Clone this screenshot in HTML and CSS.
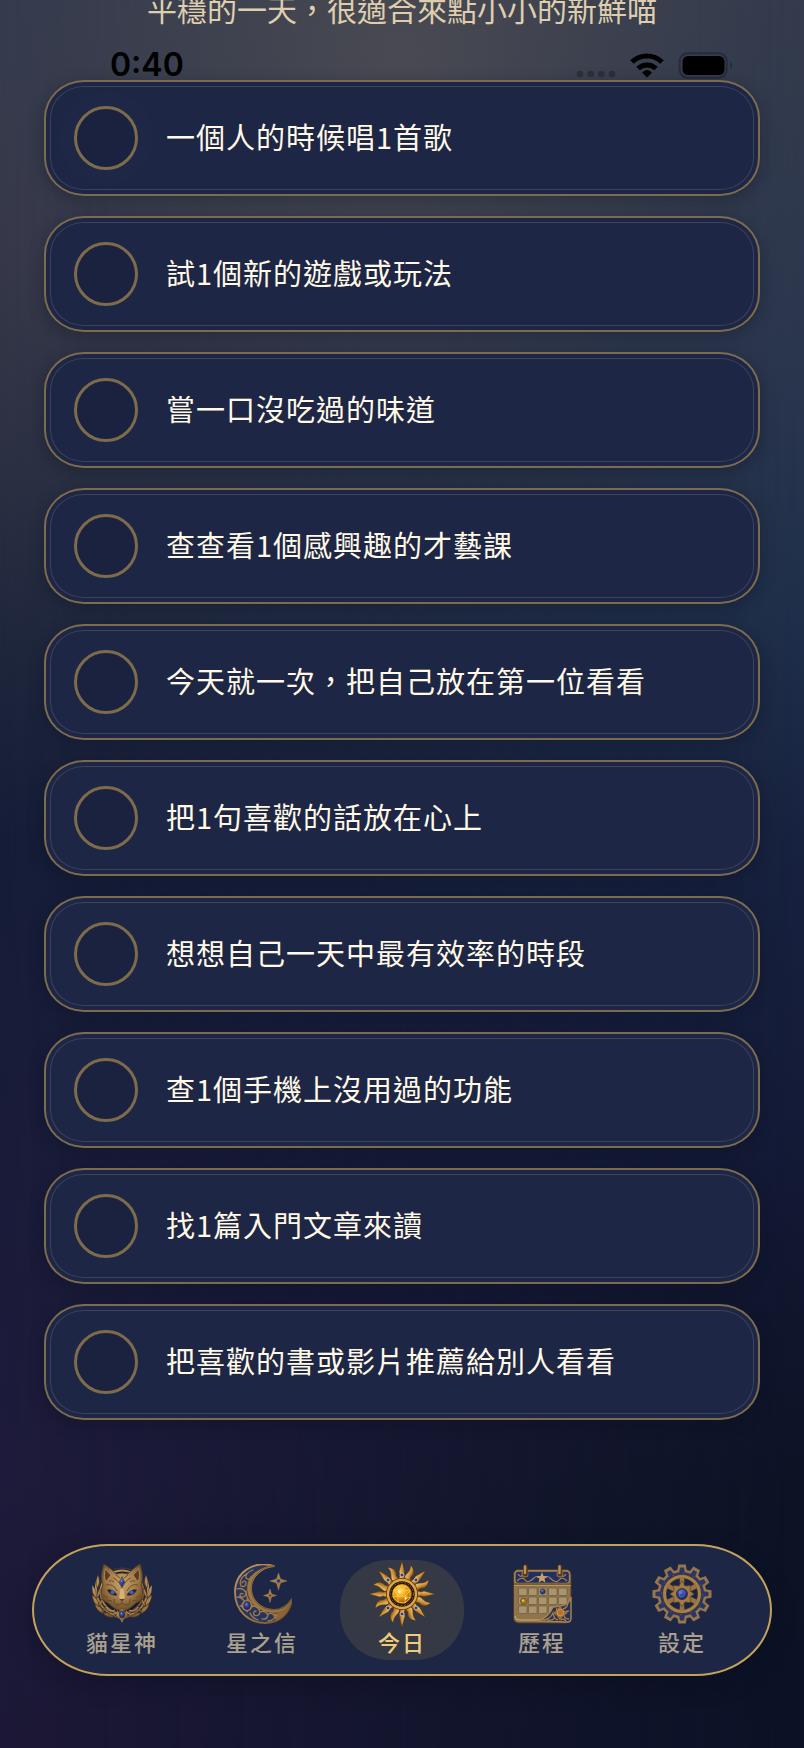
FILE: index.html
```html
<!DOCTYPE html>
<html lang="zh-Hant">
<head>
<meta charset="utf-8">
<meta name="viewport" content="width=device-width, initial-scale=1">
<title>今日</title>
<link rel="stylesheet" href="styles.css">
</head>
<body>
<div class="screen">
  <p class="intro">平穩的一天，很適合來點小小的新鮮喵</p>

  <header class="status">
    <time class="status-time">0:40</time>
    <svg class="status-icons" viewBox="0 0 158 28" aria-hidden="true">
      <g fill="#2b303c"><circle cx="4" cy="23" r="3.300"/><circle cx="14.700" cy="23" r="3.300"/><circle cx="25.400" cy="23" r="3.300"/><circle cx="36" cy="23" r="3.300"/></g>
      <g fill="none" stroke="#000" stroke-width="5">
        <path d="M56 11a21.500 21.500 0 0 1 30 0"/>
        <path d="M62 17.500a13 13 0 0 1 18 0"/>
      </g>
      <path d="M66 21.500q5-5 10 0l-5 5z" fill="#000"/>
      <rect x="103.700" y="2.200" width="47" height="24.600" rx="8" fill="none" stroke="#252b3a" stroke-width="2"/>
      <rect x="106.500" y="5" width="42" height="19" rx="5.500" fill="#000"/>
      <path d="M154.500 10.500q3 4 0 8z" fill="#1c2740"/>
    </svg>
  </header>

  <main class="tasks">
    <label class="task"><input class="check check-glow" type="checkbox"><span>一個人的時候唱1首歌</span></label>
    <label class="task"><input class="check" type="checkbox"><span>試1個新的遊戲或玩法</span></label>
    <label class="task"><input class="check" type="checkbox"><span>嘗一口沒吃過的味道</span></label>
    <label class="task"><input class="check" type="checkbox"><span>查查看1個感興趣的才藝課</span></label>
    <label class="task"><input class="check" type="checkbox"><span>今天就一次，把自己放在第一位看看</span></label>
    <label class="task"><input class="check" type="checkbox"><span>把1句喜歡的話放在心上</span></label>
    <label class="task"><input class="check" type="checkbox"><span>想想自己一天中最有效率的時段</span></label>
    <label class="task"><input class="check" type="checkbox"><span>查1個手機上沒用過的功能</span></label>
    <label class="task"><input class="check" type="checkbox"><span>找1篇入門文章來讀</span></label>
    <label class="task"><input class="check" type="checkbox"><span>把喜歡的書或影片推薦給別人看看</span></label>
  </main>

  <nav class="tabs">
    <a class="tab" href="#cat">
      <svg class="tab-icon" viewBox="0 0 60 60" aria-hidden="true">
        <defs>
          <linearGradient id="bronze" x1="0" y1="0" x2="1" y2="1"><stop offset="0" stop-color="#c39a5e"/><stop offset=".5" stop-color="#a27a45"/><stop offset="1" stop-color="#684824"/></linearGradient>
          <radialGradient id="fur" cx=".5" cy=".4" r=".65"><stop offset="0" stop-color="#c9a56d"/><stop offset=".55" stop-color="#9d7846"/><stop offset="1" stop-color="#5a3f1f"/></radialGradient>
          <radialGradient id="sapphire" cx=".4" cy=".35" r=".7"><stop offset="0" stop-color="#6c86dc"/><stop offset=".4" stop-color="#2943a4"/><stop offset="1" stop-color="#111c5e"/></radialGradient>
        </defs>
        <circle cx="30" cy="28" r="21.500" fill="#141a34" stroke="url(#bronze)" stroke-width="1.800"/>
        <circle cx="30" cy="28" r="24" fill="none" stroke="#493822" stroke-width="1"/>
        <g id="laurel">
          <path d="M5 16C1 32 8 47 27 54" fill="none" stroke="url(#bronze)" stroke-width="1.800"/>
          <path d="M6 11c2 5 2 9-1 13-1-5-1-9 1-13zM0 21c4 4 5 8 4 13-4-4-4-8-4-13zM8 24c1 4 0 7-3 10 0-4 1-7 3-10zM0 31c5 3 7 7 7 12-5-3-6-7-7-12zM10 35c1 4-1 6-3 8-1-3 1-6 3-8zM3 40c5 1 8 5 9 10-5-2-8-5-9-10zM14 42c0 3-1 5-3 7-1-3 1-5 3-7zM11 49c5-1 8 1 11 4-4 1-8 0-11-4z" fill="url(#bronze)" stroke="#3f2d1b" stroke-width=".5"/>
          <path d="M14 43q3 6 9 3M18 49q5 3 8-2" fill="none" stroke="#b18b54" stroke-width="1.200"/>
        </g>
        <use href="#laurel" transform="matrix(-1 0 0 1 60 0)"/>
        <path d="M12 0C9 8 9 16 11 21 9 24 10 28 9 31c1 5 4 7 7 8 3 3 6 5 9 7q5 3 10 0c3-2 6-4 9-7 3-1 6-3 7-8-1-3 0-7-2-10 2-5 2-13-1-21-5 3-9 7-12 10q-6-2-12 0C21 7 17 3 12 0z" fill="url(#fur)" stroke="#543b1d" stroke-width=".8"/>
        <path d="M13.500 4.500C12 9 12 14 14 18l5-7C17 9 15 7 13.500 4.500zM46.500 4.500C48 9 48 14 46 18l-5-7c2-2 4-4 5.500-6.500z" fill="#5d3d22" stroke="#cba56b" stroke-width=".6"/>
        <path d="M14 21q7-2 11 6M46 21q-7-2-11 6M21 14q4 1 6 5M39 14q-4 1-6 5M24 11l4 3M36 11l-4 3M11 31l5 3M49 31l-5 3M14 36l6 1M46 36l-6 1M17 17q3-1 5 1M43 17q-3-1-5 1" fill="none" stroke="#644723" stroke-width=".9"/>
        <path d="M28.500 25l-1.500 9 3 2 3-2-1.500-9z" fill="#d5b177"/>
        <path d="M15.500 26q6-1 9.500 5-7 1-9.500-5zM44.500 26q-6-1-9.500 5 7 1 9.500-5z" fill="#16204c" stroke="#3b2815" stroke-width=".8"/>
        <circle cx="20.500" cy="28.300" r="2" fill="#4261c0"/><circle cx="39.500" cy="28.300" r="2" fill="#4261c0"/>
        <path d="M27.500 35h5l-2.500 2.500z" fill="#5c3b22"/>
        <path d="M30 37.500V39q-2 3-5 1M30 39q2 3 5 1M22 35q-1 4 3 7M38 35q1 4-3 7" fill="none" stroke="#5c3f22" stroke-width=".8"/>
        <path d="M30 12.500l3 6-3 5.500-3-5.500z" fill="url(#sapphire)" stroke="#76542c" stroke-width=".9"/>
        <path d="M30 45l6 6-4 4-2 4-2-4-4-4z" fill="url(#bronze)"/>
        <ellipse cx="30" cy="50.500" rx="2.800" ry="3.500" fill="url(#sapphire)" stroke="#4a3219" stroke-width=".7"/>
      </svg>
      <span>貓星神</span>
    </a>
    <a class="tab" href="#letter">
      <svg class="tab-icon" viewBox="0 0 60 60" aria-hidden="true">
        <path d="M42 2C22-4 3 8 3 28 3 48 18 59 33 59c15 0 25-10 27-24-5 8-11 11-18 11-14 0-23-10-23-22C19 13 29 3 42 2z" fill="#263461" stroke="url(#bronze)" stroke-width="1.800" stroke-linejoin="round"/>
        <path d="M42 2C29 3 19 13 19 24c0 12 9 22 23 22 7 0 13-3 18-11-3 11-11 14-18 14C26 49 15 38 15 24 15 11 28 2 42 2z" fill="#9c7645" stroke="#5d411f" stroke-width=".5"/>
        <path d="M44 57c8-3 14-12 16-22-4 8-10 14-20 15z" fill="#8a6437"/>
        <g fill="none" stroke="#a17b48" stroke-width="1.300" stroke-linecap="round">
          <path d="M21 6q-8 3-7 8 3 3 5-1M14 10q-8 6-5 12 5 2 5-4-3-2-4 1M5 25q6-2 9 4-1 6-6 3 0-4 3-2M5 33q5 0 8 5M14 27q0 7 5 12M20 42q6 0 8 6-1 5-6 3-1-4 2-4M28 48q5-2 8 3-1 5-6 4M36 50q5-2 8 2M18 49q2 5 8 7M36 57q5 0 9-6"/>
        </g>
        <circle cx="15" cy="41.500" r="5.500" fill="#a17b48"/><path d="M15 34l2 4h-4zM15 49l2-4h-4zM7 42l4-2v4zM23 42l-4-2v4z" fill="#a17b48"/>
        <ellipse cx="15" cy="41.500" rx="3.300" ry="4" fill="url(#sapphire)" stroke="#34220f" stroke-width=".6"/>
        <path d="M46.500 9l2 6 6.500 2-6.500 2-2 7-2-7-6.500-2 6.500-2zM38 25l1.500 5 5 1.500-5 1.500-1.500 5.500-1.500-5.500-5-1.500 5-1.500z" fill="url(#bronze)" stroke="#b08c58" stroke-width=".4"/>
        <circle cx="46.500" cy="17" r="1.800" fill="#243a91"/><circle cx="38" cy="31.500" r="1" fill="#4c3a2b"/>
      </svg>
      <span>星之信</span>
    </a>
    <a class="tab tab-active" href="#today" aria-current="page">
      <svg class="tab-icon tab-icon-large" viewBox="-33 -33 66 66" aria-hidden="true">
        <defs>
          <linearGradient id="gold" x1="0" y1="0" x2="1" y2="0"><stop offset="0" stop-color="#f2c668"/><stop offset=".5" stop-color="#cf943a"/><stop offset="1" stop-color="#74430f"/></linearGradient>
          <radialGradient id="amber" cx=".42" cy=".35" r=".65"><stop offset="0" stop-color="#ffe46b"/><stop offset=".45" stop-color="#f0a51f"/><stop offset="1" stop-color="#984b06"/></radialGradient>
          <path id="spike" d="M-3.500-14L-2-19-3-22 0-33 3-22 2-19 3.500-14z" fill="url(#gold)" stroke="#4d2d0e" stroke-width=".5"/>
          <path id="flame" d="M-3.500-14C-6-20 0-22-3-30 3-27 4-23 2-20c-1 2 1 3 1.500 6z" fill="url(#gold)" stroke="#4d2d0e" stroke-width=".5"/>
        </defs>
        <g id="flames"><use href="#flame" transform="rotate(22.500)"/><use href="#flame" transform="rotate(67.500)"/><use href="#flame" transform="rotate(112.500)"/><use href="#flame" transform="rotate(157.500)"/></g>
        <use href="#flames" transform="rotate(180)"/>
        <g id="spikes"><use href="#spike"/><use href="#spike" transform="rotate(45)"/><use href="#spike" transform="rotate(90)"/><use href="#spike" transform="rotate(135)"/></g>
        <use href="#spikes" transform="rotate(180)"/>
        <circle r="16" fill="#5a3510"/>
        <circle r="14" fill="#24190f" stroke="#dda548" stroke-width="2.400"/>
        <circle r="11.500" fill="none" stroke="#8b5a1d" stroke-width="1" stroke-dasharray="2 1.500"/>
        <circle r="10" fill="url(#amber)"/>
        <path d="M-4-8L4-8 8-3 8 4 3 9-4 8-9 3-8-4zM-4-8L0-4 4-8M0-4L8-3 3 2 8 4M0-4L-8-4-4 2-9 3M-4 2L3 2 3 9M-4 2L-4 8" fill="none" stroke="#ffd64f" stroke-width=".7"/>
        <path d="M-4-4l3 1-2 3zM3 3l3 1-3 2z" fill="#fff09a"/>
        <g fill="#293c94" stroke="#f0ca80" stroke-width=".9"><circle cy="-19" r="2"/><circle cy="20" r="2"/><circle cx="14" cy="-14" r="2"/><circle cx="-14" cy="-14" r="2"/><circle cx="14" cy="14" r="2"/><circle cx="-14" cy="14" r="2"/></g>
      </svg>
      <span>今日</span>
    </a>
    <a class="tab" href="#history">
      <svg class="tab-icon" viewBox="0 0 60 60" aria-hidden="true">
        <rect x="1.500" y="5.500" width="57.500" height="53.500" rx="5" fill="#8f744e" stroke="#4c3a20" stroke-width="1"/>
        <path d="M3 52q0 4 4 4h28" fill="none" stroke="#cbb07f" stroke-width="1"/>
        <rect x="3" y="7" width="54.500" height="12.500" rx="3" fill="#222f62" stroke="#a8844f" stroke-width="1.300"/>
        <path d="M2 20h57" stroke="#5a4022"/><path d="M2 21.500h57" stroke="#b9955f" stroke-width="1.200"/>
        <path d="M5 17q5-5 8-1t9-2q3-3 4 0M55 17q-5-5-8-1t-9-2q-3-3-4 0M6 10q2 4 5 1M54 10q-2 4-5 1" fill="none" stroke="#a58150" stroke-width="1.200"/>
        <path d="M30 8l1.500 4 4 .2-3 2.600 1 4-3.500-2.300-3.500 2.300 1-4-3-2.600 4-.2z" fill="#cba166"/>
        <g fill="#a8946f" stroke="#6a5433" stroke-width=".6">
          <g id="week"><rect x="6.500" y="24" width="8.500" height="7.500" rx="1"/><rect x="16.500" y="24" width="8.500" height="7.500" rx="1"/><rect x="26.500" y="24" width="8.500" height="7.500" rx="1"/><rect x="36.500" y="24" width="8.500" height="7.500" rx="1"/><rect x="46.500" y="24" width="8.500" height="7.500" rx="1"/></g>
          <use href="#week" y="9"/><use href="#week" y="18"/>
        </g>
        <path d="M59 33C57 42 49 42 41 43c-3 7-7 12-16 14l31 1q3 0 3-4z" fill="#27315a" stroke="#a8844f" stroke-width="1.400"/>
        <path d="M29 56q9 0 12-7 1 6 5 7M45 44q-2 5 2 6M56 39q-1 5-5 6M57 47q-5 0-5 4t5 4M35 56q6 1 8-3M49 56q3-2 5 1" fill="none" stroke="#a57f4a" stroke-width="1.300"/>
        <path d="M48 41l3 5 5 3-5 3-3 5-3-5-4-3 4-3z" fill="#9a6e38"/>
        <circle cx="48.500" cy="48.500" r="3.300" fill="#b8712d" stroke="#d6a35b" stroke-width=".7"/>
        <circle cx="30.700" cy="27.500" r="2.700" fill="url(#sapphire)" stroke="#5d4828" stroke-width=".6"/>
        <circle cx="11.500" cy="37" r="3" fill="#b17e24" stroke="#66430f" stroke-width=".8"/><circle cx="11" cy="36.500" r="1" fill="#f0c866"/>
        <g fill="none"><circle cx="13" cy="10" r="2.800" stroke="#8d693a" stroke-width="1.500"/><circle cx="48" cy="10" r="2.800" stroke="#8d693a" stroke-width="1.500"/><path d="M13.500 10V2.500M48 10V2.500" stroke="#523718" stroke-width="4.500" stroke-linecap="round"/><path d="M13 9V2.500M47.500 9V2.500" stroke="#b8935d" stroke-width="2.400" stroke-linecap="round"/></g>
      </svg>
      <span>歷程</span>
    </a>
    <a class="tab" href="#settings">
      <svg class="tab-icon" viewBox="-30 -30 60 60" aria-hidden="true">
        <defs>
          <path id="tooth" d="M-5-22L-3.800-29.500H3.800L5-22z"/>
          <g id="teeth"><use href="#tooth"/><use href="#tooth" transform="rotate(30)"/><use href="#tooth" transform="rotate(60)"/><use href="#tooth" transform="rotate(90)"/><use href="#tooth" transform="rotate(120)"/><use href="#tooth" transform="rotate(150)"/><use href="#tooth" transform="rotate(180)"/><use href="#tooth" transform="rotate(210)"/><use href="#tooth" transform="rotate(240)"/><use href="#tooth" transform="rotate(270)"/><use href="#tooth" transform="rotate(300)"/><use href="#tooth" transform="rotate(330)"/></g>
          <path id="notch" d="M-3-20L-2-26.500H2L3-20z"/>
          <g id="notches"><use href="#notch"/><use href="#notch" transform="rotate(30)"/><use href="#notch" transform="rotate(60)"/><use href="#notch" transform="rotate(90)"/><use href="#notch" transform="rotate(120)"/><use href="#notch" transform="rotate(150)"/></g>
          <path id="spoke" d="M-2.500-17L-2-8h4L2.500-17z"/>
        </defs>
        <g fill="#98754a"><use href="#teeth"/><circle r="24.500"/></g>
        <g fill="#2a3766"><circle r="22"/><use href="#notches"/><use href="#notches" transform="rotate(180)"/></g>
        <circle r="20.500" fill="none" stroke="#6e583e" stroke-width="1" stroke-dasharray="1.500 9.230"/>
        <circle r="17.500" fill="#1b2342" stroke="#4f3a21" stroke-width="4.400"/>
        <circle r="17.500" fill="none" stroke="#a5804d" stroke-width="3"/>
        <g fill="#967142"><use href="#spoke"/><use href="#spoke" transform="rotate(60)"/><use href="#spoke" transform="rotate(120)"/><use href="#spoke" transform="rotate(180)"/><use href="#spoke" transform="rotate(240)"/><use href="#spoke" transform="rotate(300)"/></g>
        <path d="M0-13L3-8 8.500-8.500 8-3 12 0 8 3 8.500 8.500 3 8 0 13-3 8-8.500 8.500-8 3-12 0-8-3-8.500-8.500-3-8z" fill="#a07b48" stroke="#5d4223" stroke-width=".7"/>
        <circle r="5.500" fill="url(#sapphire)" stroke="#513719" stroke-width="1"/>
        <path d="M-3-2L0-4 3-2 2 2-2 3z" fill="none" stroke="#6984dc" stroke-width=".6"/>
      </svg>
      <span>設定</span>
    </a>
  </nav>
</div>
</body>
</html>
```
FILE: styles.css
```css
* {
  box-sizing: border-box;
}

body {
  margin: 0;
  color: #fff9e6;
  font-family: "Noto Sans CJK TC", sans-serif;
  background: #14172e;
}

.screen {
  position: relative;
  isolation: isolate;
  display: flex;
  flex-direction: column;
  min-height: 100vh;
  overflow: hidden;
  background: linear-gradient(180deg, #363c4e 0%, #37394a 14%, #2b3042 27%, #1e253c 38%, #161d37 48%, #1a1c39 66%, #1e1b3b 84%, #1c1836 100%);
}

/* Night-sky tint that strengthens toward the right edge */
.screen::before {
  content: "";
  position: absolute;
  inset: 0;
  z-index: -2;
  background: linear-gradient(180deg, #343b4c 0%, #2c374e 18%, #1f2f4a 35%, #17223f 48%, #141b38 63%, #10152c 76%, #0c1324 86%, #0b1226 100%);
  mask-image: linear-gradient(90deg, transparent, #000);
}

.screen::after {
  content: "";
  position: absolute;
  inset: 0;
  z-index: -1;
  background: radial-gradient(ellipse 46% 22% at 50% 3%, rgba(90, 86, 86, .55), rgba(90, 86, 86, .25) 50%, transparent);
}

.intro {
  margin: -12px 0 0;
  color: #dfceae;
  font-size: 30px;
  line-height: 40px;
  text-align: center;
}

.status {
  display: flex;
  align-items: center;
  justify-content: space-between;
  height: 52px;
  padding: 22px 70px 0 110px;
  color: #000;
}

.status-time {
  font-family: Inter, sans-serif;
  font-size: 32px;
  font-weight: 600;
  line-height: 30px;
}

.status-icons {
  flex: none;
  width: 158px;
  height: 28px;
}

.tasks {
  display: flex;
  flex: 1;
  flex-direction: column;
  gap: 20px;
  padding: 0 44px 40px;
}

.task {
  position: relative;
  display: flex;
  align-items: center;
  gap: 28px;
  min-height: 116px;
  padding: 24px 28px;
  border: 2px solid #7c6b4e;
  border-radius: 40px / 38px;
  background: #1e2645;
  box-shadow: 0 4px 16px rgba(8, 12, 28, .3);
  font-size: 29px;
  line-height: 40px;
  letter-spacing: 1px;
  cursor: pointer;
}

.task span {
  padding-bottom: 4px;
}

.task::after {
  content: "";
  position: absolute;
  inset: 4px;
  border: 1px solid #3c425a;
  border-radius: 34px / 32px;
  pointer-events: none;
}

.check {
  appearance: none;
  flex: none;
  width: 64px;
  height: 64px;
  margin: 0;
  border: 3px solid #7d6c4c;
  border-radius: 50%;
  background: #1b2240;
}

.check:checked {
  background: #c8a45c;
}

.check-glow {
  box-shadow: 0 0 0 15px rgba(30, 42, 72, .5);
}

.tabs {
  display: grid;
  grid-template-columns: repeat(5, 1fr);
  gap: 16px;
  margin: 0 32px 72px;
  padding: 14px 26px;
  border: 2px solid #c3a25c;
  border-radius: 76px / 66px;
  background: #1e2645;
  box-shadow: 0 8px 24px rgba(8, 10, 24, .3);
}

.tab {
  display: flex;
  flex-direction: column;
  align-items: center;
  gap: 2px;
  height: 100px;
  padding-top: 4px;
  border-radius: 48px;
  color: #aaa18f;
  font-size: 22px;
  font-weight: 500;
  line-height: 30px;
  letter-spacing: 2px;
  text-decoration: none;
}

.tab-active {
  color: #f2cb79;
  background: #353945;
}

.tab-icon {
  display: block;
  width: 60px;
  height: 60px;
}

.tab-icon-large {
  width: 66px;
  height: 66px;
  margin: -3px 0;
}
```
